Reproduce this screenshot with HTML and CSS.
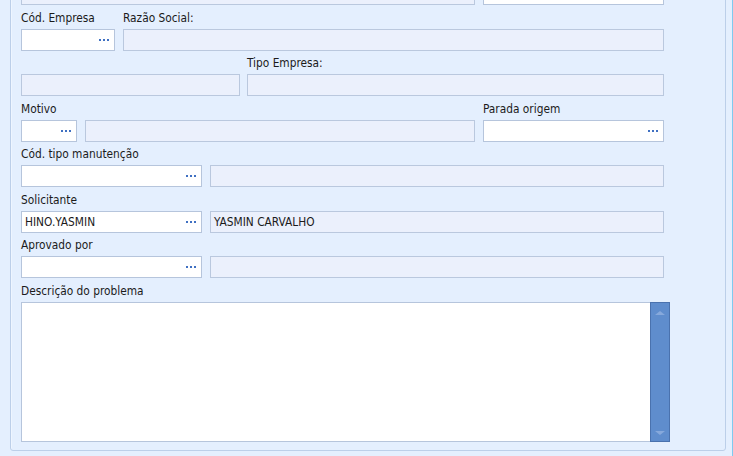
FILE: index.html
```html
<!DOCTYPE html>
<html lang="pt-BR">
<head>
<meta charset="utf-8">
<title>Solicitação de manutenção</title>
<link rel="stylesheet" href="styles.css">
</head>
<body>
<div class="page">
  <div class="main">
    <div class="panel">
      <div class="row row0">
        <div class="field w-455"><div class="input gray"></div></div>
        <div class="field w-181"><div class="input white"></div></div>
      </div>
      <div class="row">
        <div class="field w-95"><div class="lbl">Cód. Empresa</div><div class="input white"><span class="dots"></span></div></div>
        <div class="field grow"><div class="lbl">Razão Social:</div><div class="input gray"></div></div>
      </div>
      <div class="row gap7">
        <div class="field w-220"><div class="lbl">&nbsp;</div><div class="input gray"></div></div>
        <div class="field grow"><div class="lbl">Tipo Empresa:</div><div class="input gray"></div></div>
      </div>
      <div class="row">
        <div class="field w-57"><div class="lbl">Motivo</div><div class="input white"><span class="dots"></span></div></div>
        <div class="field grow"><div class="lbl">&nbsp;</div><div class="input gray"></div></div>
        <div class="field w-181"><div class="lbl">Parada origem</div><div class="input white"><span class="dots"></span></div></div>
      </div>
      <div class="row">
        <div class="field w-182"><div class="lbl">Cód. tipo manutenção</div><div class="input white"><span class="dots"></span></div></div>
        <div class="field grow"><div class="lbl">&nbsp;</div><div class="input gray"></div></div>
      </div>
      <div class="row">
        <div class="field w-182"><div class="lbl">Solicitante</div><div class="input white"><span class="val">HINO.YASMIN</span><span class="dots"></span></div></div>
        <div class="field grow"><div class="lbl">&nbsp;</div><div class="input gray"><span class="val">YASMIN CARVALHO</span></div></div>
      </div>
      <div class="row">
        <div class="field w-182"><div class="lbl">Aprovado por</div><div class="input white"><span class="dots"></span></div></div>
        <div class="field grow"><div class="lbl">&nbsp;</div><div class="input gray"></div></div>
      </div>
      <div class="row wide">
        <div class="field grow">
          <div class="lbl">Descrição do problema</div>
          <div class="memo">
            <div class="memo-text"></div>
            <div class="vscroll">
              <span class="arr up"></span>
              <span class="arr down"></span>
            </div>
          </div>
        </div>
      </div>
    </div>
  </div>
  <div class="edge"></div>
</div>
</body>
</html>
```
FILE: styles.css
```css
html, body {
  margin: 0;
  padding: 0;
}
body {
  background: #e4effe;
  font-family: "DejaVu Sans Condensed", "DejaVu Sans", sans-serif;
  font-stretch: condensed;
  font-size: 11.8px;
  color: #1b1b1b;
}
.page {
  display: flex;
  width: 733px;
  height: 456px;
  overflow: hidden;
}
.main {
  flex: 1;
  padding-left: 10px;
  padding-right: 6px;
}
.edge {
  width: 2px;
  background: #7fcaef;
}
.panel {
  margin-top: -27px;
  height: 478px;
  box-sizing: border-box;
  border: 1px solid #bccfe9;
  border-radius: 3px;
  box-shadow: inset 1px 1px 0 #eef5ff;
  padding: 0 61px 0 10px;
  display: flex;
  flex-direction: column;
}
.row {
  display: flex;
  gap: 8px;
  margin-top: 6.5px;
}
.row.gap7 { gap: 7px; }
.row0 { margin-top: 9px; }
.row.wide { margin-right: -6px; }
.field {
  display: flex;
  flex-direction: column;
  flex: none;
}
.field.grow { flex: 1; }
.w-455 { width: 454px; }
.w-181 { width: 181px; }
.w-95 { width: 94px; }
.w-220 { width: 219px; }
.w-57 { width: 56px; }
.w-182 { width: 181px; }
.lbl {
  height: 12px;
  line-height: 12px;
  margin-bottom: 5px;
  white-space: nowrap;
}
.input {
  height: 22px;
  box-sizing: border-box;
  border: 1px solid #bac8de;
  display: flex;
  align-items: center;
  padding: 0 4px 0 3px;
}
.input.white { background: #ffffff; border-color: #b6c5dc; }
.input.gray { background: #ebf0fc; }
.val {
  flex: 1;
  white-space: nowrap;
}
.dots {
  margin-left: auto;
  width: 2px;
  height: 2px;
  margin-right: 9px;
  background: #3f70c2;
  box-shadow: 4px 0 0 #3f70c2, 8px 0 0 #3f70c2;
}
.memo {
  display: flex;
  height: 140px;
}
.memo-text {
  flex: 1;
  background: #ffffff;
  border: 1px solid #b6c5dc;
  border-right: none;
}
.vscroll {
  width: 20px;
  box-sizing: border-box;
  background: #5f8dcd;
  border: 1px solid #4a72ae;
  display: flex;
  flex-direction: column;
  align-items: center;
  justify-content: space-between;
  padding: 8px 0 6px;
}
.arr {
  width: 0;
  height: 0;
  border-left: 5px solid transparent;
  border-right: 5px solid transparent;
}
.arr.up { border-bottom: 4px solid #87a9dc; }
.arr.down { border-top: 4px solid #87a9dc; }
```
